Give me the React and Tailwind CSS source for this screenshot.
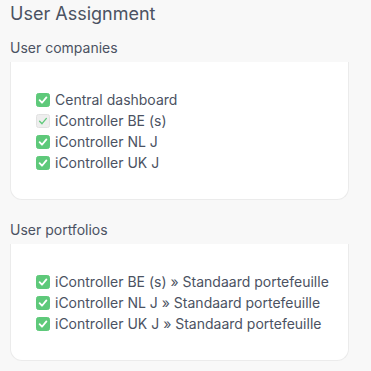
function CheckIcon({ muted }) {
  return (
    <svg width="14" height="14" viewBox="0 0 14 14" className="shrink-0">
      <rect x="0.5" y="0.5" width="13" height="13" rx="2" fill={muted ? "#eeeeee" : "#5ec97a"} stroke={muted ? "#e2e2e2" : "#5ec97a"} />
      <path d="M3.6 7.2 L6 9.7 L10.4 4.4" fill="none" stroke={muted ? "#5ec97a" : "#ffffff"} strokeWidth={muted ? 1.3 : 1.8} strokeLinecap="round" strokeLinejoin="round" />
    </svg>
  );
}

function Item({ label, muted }) {
  return (
    <li className="flex items-center gap-[5px] h-[21px]">
      <CheckIcon muted={muted} />
      <span>{label}</span>
    </li>
  );
}

function Section({ title, items }) {
  return (
    <section>
      <h3 className="text-[14px] leading-[21px] text-[#4b5262]">{title}</h3>
      <div className="mt-1 w-[339px] bg-white border-x border-b border-[#ebebeb] rounded-b-xl pl-[25px] pt-[27px] pb-[26px]">
        <ul className="text-[14px] leading-[21px] text-[#4b5262]">
          {items.map((it) => (
            <Item key={it.label} label={it.label} muted={it.muted} />
          ))}
        </ul>
      </div>
    </section>
  );
}

export default function App() {
  const companies = [
    { label: "Central dashboard" },
    { label: "iController BE (s)", muted: true },
    { label: "iController NL J" },
    { label: "iController UK J" },
  ];
  const portfolios = [
    { label: "iController BE (s) » Standaard portefeuille" },
    { label: "iController NL J » Standaard portefeuille" },
    { label: "iController UK J » Standaard portefeuille" },
  ];

  return (
    <div className="w-[371px] h-[371px] bg-[#f8f8f8] pl-[10px] font-['Inter',sans-serif] overflow-hidden">
      <h2 className="text-[18px] leading-[27px] text-[#4b5262]">User Assignment</h2>
      <div className="mt-[10px]">
        <Section title="User companies" items={companies} />
      </div>
      <div className="mt-[19px]">
        <Section title="User portfolios" items={portfolios} />
      </div>
    </div>
  );
}
